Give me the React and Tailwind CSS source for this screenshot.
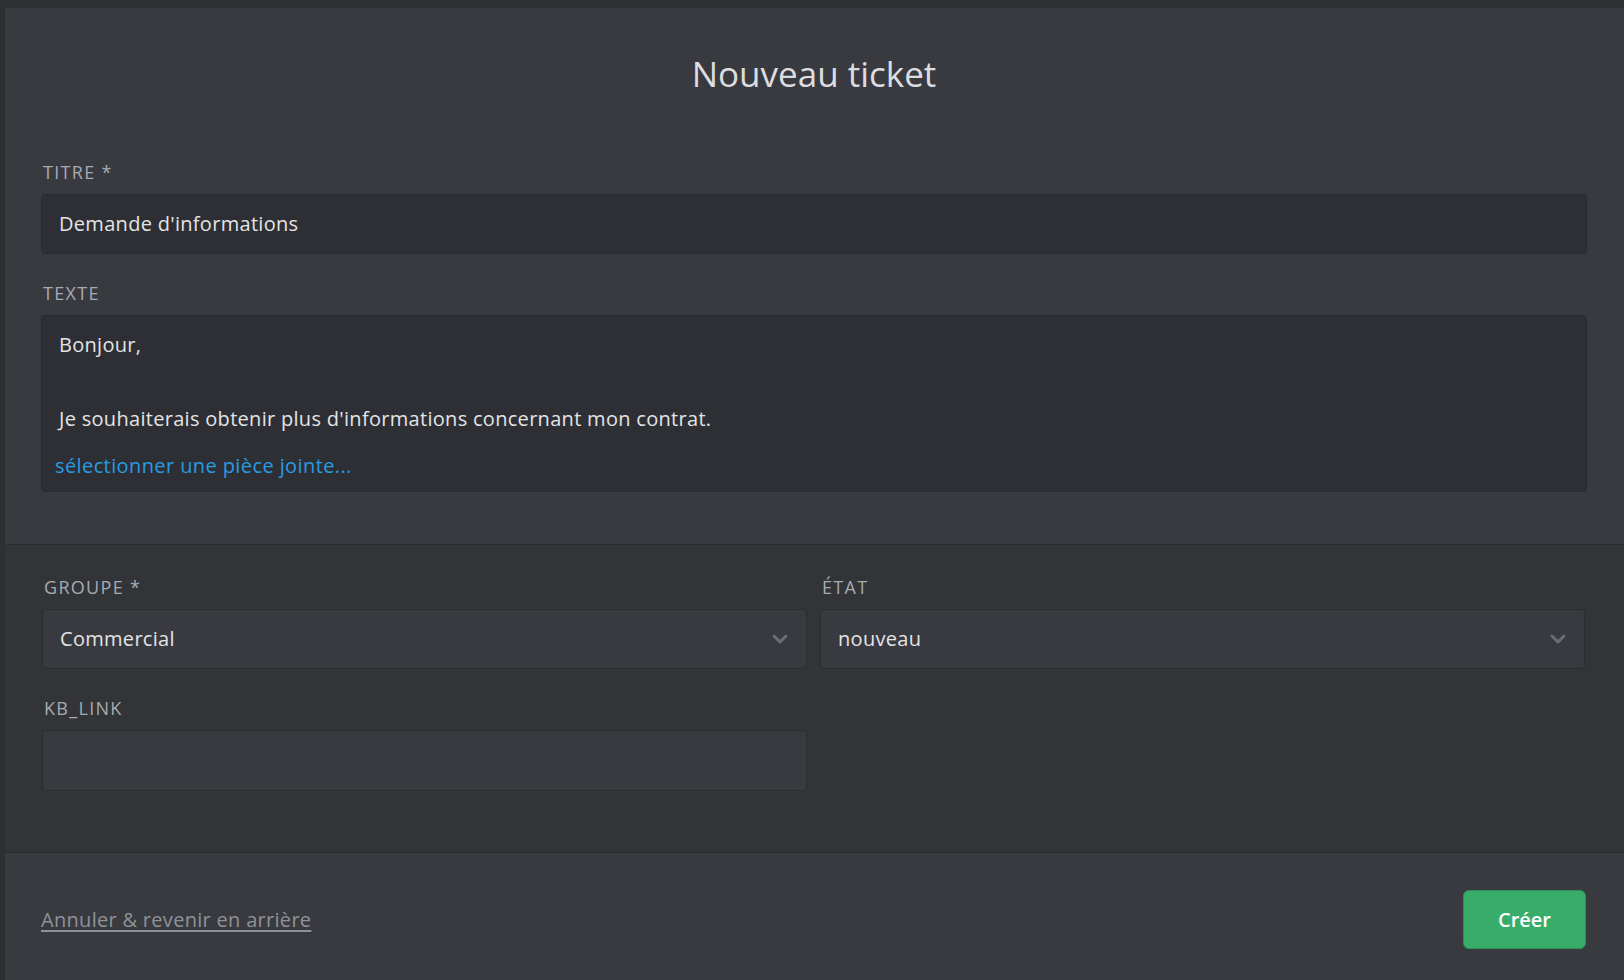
import { ChevronDown } from "lucide-react";

const FONT = { fontFamily: '"Open Sans", "Noto Sans", sans-serif' };

function Label({ children }) {
  return (
    <div className="mb-[10px] pl-[2px] text-[18px] leading-[24px] tracking-[1.3px] text-[#a6abb1]">{children}</div>
  );
}

function Select({ value }) {
  return (
    <div className="flex h-[60px] items-center justify-between rounded-[4px] border border-[#2b2c30] bg-[#393a3f] pl-[17px] pr-[14px]">
      <span className="text-[20px] leading-[28px] tracking-[0.3px] text-[#e3e4e6]">{value}</span>
      <ChevronDown className="h-[24px] w-[24px] text-[#6c6e73]" strokeWidth={3} />
    </div>
  );
}

export default function App() {
  return (
    <div className="h-[980px] overflow-hidden bg-[#2e2f33] pl-[5px] pt-[8px]" style={FONT}>
      <div className="flex h-[972px] flex-col bg-[#393a3f]">
        {/* titre + texte */}
        <section className="pb-[52px] pl-[36px] pr-[37px] pt-[44px]">
          <h1 className="mb-[64px] text-center text-[35px] font-normal leading-[44px] text-[#dcdde0]">
            Nouveau ticket
          </h1>

          <Label>TITRE *</Label>
          <div className="flex h-[60px] items-center rounded-[4px] border border-[#2a2b2f] bg-[#2e2f34] px-[17px]">
            <span className="text-[20px] leading-[28px] tracking-[0.3px] text-[#e3e4e6]">Demande d'informations</span>
          </div>

          <div className="mt-[27px]">
            <Label>TEXTE</Label>
            <div className="rounded-[4px] border border-[#2a2b2f] bg-[#2e2f34] pb-[11px] pt-[10px]">
              <div className="px-[17px] text-[20px] leading-[37px] tracking-[0.3px] text-[#e3e4e6]">
                <div>Bonjour,</div>
                <div>&nbsp;</div>
                <div>Je souhaiterais obtenir plus d'informations concernant mon contrat.</div>
              </div>
              <a
                href="#"
                className="mt-[15px] block px-[13px] text-[20px] leading-[28px] tracking-[0.4px] text-[#269ce2]"
              >
                sélectionner une pièce jointe...
              </a>
            </div>
          </div>
        </section>

        {/* attributs */}
        <section className="border-t border-[#2b2c30] bg-[#333438] pb-[61px] pl-[37px] pr-[39px] pt-[30px]">
          <div className="grid grid-cols-2 gap-x-[13px]">
            <div>
              <Label>GROUPE *</Label>
              <Select value="Commercial" />
            </div>
            <div>
              <Label>ÉTAT</Label>
              <Select value="nouveau" />
            </div>
            <div className="mt-[27px]">
              <Label>KB_LINK</Label>
              <div className="h-[61px] rounded-[4px] border border-[#2b2c30] bg-[#393a3f]" />
            </div>
          </div>
        </section>

        {/* actions */}
        <footer className="flex flex-1 items-center justify-between border-t border-[#2b2c30] pb-[31px] pl-[36px] pr-[38px] pt-[37px]">
          <a
            href="#"
            className="text-[20px] leading-[28px] tracking-[0.3px] text-[#8e9298] underline underline-offset-[3px]"
          >
            Annuler &amp; revenir en arrière
          </a>
          <button
            type="button"
            className="h-[59px] w-[123px] rounded-[6px] border border-[#2f8f58] bg-[#38ad6a] text-[20px] font-semibold text-white"
          >
            Créer
          </button>
        </footer>
      </div>
    </div>
  );
}
